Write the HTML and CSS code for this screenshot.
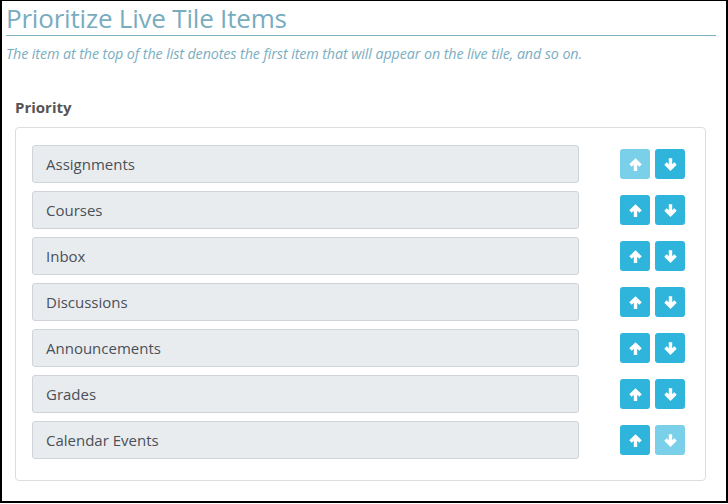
FILE: index.html
```html
<!DOCTYPE html>
<html lang="en">
<head>
  <meta charset="UTF-8">
  <title>Prioritize Live Tile Items</title>
  <meta name="viewport" content="width=device-width, initial-scale=1.0">
  <link rel="stylesheet" href="styles.css">
</head>
<body>
  <div class="frame">
    <h1 class="title">Prioritize Live Tile Items</h1>
    <p class="hint">The item at the top of the list denotes the first item that will appear on the live tile, and so on.</p>

    <div class="section">
      <h2 class="label">Priority</h2>
      <div class="panel">
        <div class="row">
          <div class="item">Assignments</div>
          <div class="btns">
            <button class="btn off"><svg viewBox="0 0 12 12"><path d="M6 1.5 L1.6 5.9 L3.3 7.6 L4.8 6.1 V10.5 H7.2 V6.1 L8.7 7.6 L10.4 5.9 Z"/></svg></button>
            <button class="btn"><svg viewBox="0 0 12 12"><path d="M6 10.5 L1.6 6.1 L3.3 4.4 L4.8 5.9 V1.5 H7.2 V5.9 L8.7 4.4 L10.4 6.1 Z"/></svg></button>
          </div>
        </div>
        <div class="row">
          <div class="item">Courses</div>
          <div class="btns">
            <button class="btn"><svg viewBox="0 0 12 12"><path d="M6 1.5 L1.6 5.9 L3.3 7.6 L4.8 6.1 V10.5 H7.2 V6.1 L8.7 7.6 L10.4 5.9 Z"/></svg></button>
            <button class="btn"><svg viewBox="0 0 12 12"><path d="M6 10.5 L1.6 6.1 L3.3 4.4 L4.8 5.9 V1.5 H7.2 V5.9 L8.7 4.4 L10.4 6.1 Z"/></svg></button>
          </div>
        </div>
        <div class="row">
          <div class="item">Inbox</div>
          <div class="btns">
            <button class="btn"><svg viewBox="0 0 12 12"><path d="M6 1.5 L1.6 5.9 L3.3 7.6 L4.8 6.1 V10.5 H7.2 V6.1 L8.7 7.6 L10.4 5.9 Z"/></svg></button>
            <button class="btn"><svg viewBox="0 0 12 12"><path d="M6 10.5 L1.6 6.1 L3.3 4.4 L4.8 5.9 V1.5 H7.2 V5.9 L8.7 4.4 L10.4 6.1 Z"/></svg></button>
          </div>
        </div>
        <div class="row">
          <div class="item">Discussions</div>
          <div class="btns">
            <button class="btn"><svg viewBox="0 0 12 12"><path d="M6 1.5 L1.6 5.9 L3.3 7.6 L4.8 6.1 V10.5 H7.2 V6.1 L8.7 7.6 L10.4 5.9 Z"/></svg></button>
            <button class="btn"><svg viewBox="0 0 12 12"><path d="M6 10.5 L1.6 6.1 L3.3 4.4 L4.8 5.9 V1.5 H7.2 V5.9 L8.7 4.4 L10.4 6.1 Z"/></svg></button>
          </div>
        </div>
        <div class="row">
          <div class="item">Announcements</div>
          <div class="btns">
            <button class="btn"><svg viewBox="0 0 12 12"><path d="M6 1.5 L1.6 5.9 L3.3 7.6 L4.8 6.1 V10.5 H7.2 V6.1 L8.7 7.6 L10.4 5.9 Z"/></svg></button>
            <button class="btn"><svg viewBox="0 0 12 12"><path d="M6 10.5 L1.6 6.1 L3.3 4.4 L4.8 5.9 V1.5 H7.2 V5.9 L8.7 4.4 L10.4 6.1 Z"/></svg></button>
          </div>
        </div>
        <div class="row">
          <div class="item">Grades</div>
          <div class="btns">
            <button class="btn"><svg viewBox="0 0 12 12"><path d="M6 1.5 L1.6 5.9 L3.3 7.6 L4.8 6.1 V10.5 H7.2 V6.1 L8.7 7.6 L10.4 5.9 Z"/></svg></button>
            <button class="btn"><svg viewBox="0 0 12 12"><path d="M6 10.5 L1.6 6.1 L3.3 4.4 L4.8 5.9 V1.5 H7.2 V5.9 L8.7 4.4 L10.4 6.1 Z"/></svg></button>
          </div>
        </div>
        <div class="row">
          <div class="item">Calendar Events</div>
          <div class="btns">
            <button class="btn"><svg viewBox="0 0 12 12"><path d="M6 1.5 L1.6 5.9 L3.3 7.6 L4.8 6.1 V10.5 H7.2 V6.1 L8.7 7.6 L10.4 5.9 Z"/></svg></button>
            <button class="btn off"><svg viewBox="0 0 12 12"><path d="M6 10.5 L1.6 6.1 L3.3 4.4 L4.8 5.9 V1.5 H7.2 V5.9 L8.7 4.4 L10.4 6.1 Z"/></svg></button>
          </div>
        </div>
      </div>
    </div>
  </div>
</body>
</html>
```

FILE: styles.css
```css
body { margin: 0; font-family: "Open Sans", "Noto Sans", sans-serif; background: #fff; }
.frame { width: 720px; height: 500px; border: 2px solid #000; border-top-width: 1px; padding: 0 0 0 4px; overflow: hidden; }
.title { margin: 0 10px 0 0; font-size: 26px; font-weight: 400; line-height: 34px; color: #78acbf; border-bottom: 1px solid #7eafc1; letter-spacing: -0.2px; }
.hint { margin: 8px 0 0; font-size: 14.3px; font-style: italic; color: #7aaec1; line-height: 20px; letter-spacing: -0.1px; }
.section { padding: 0 20px 0 9px; }
.label { margin: 33px 0 0; font-size: 15px; font-weight: 700; color: #555; line-height: 20px; }
.panel { margin-top: 10px; border: 1px solid #ddd; border-radius: 4px; padding: 17px 20px 21px 16px; display: flex; flex-direction: column; gap: 8px; }
.row { display: flex; align-items: center; gap: 41px; }
.item { flex: 1; height: 36px; line-height: 36px; padding: 0 13px; background: #e9ecef; border: 1px solid #ced4da; border-radius: 3px; color: #495057; font-size: 15px; }
.btns { display: flex; gap: 5px; }
.btn { width: 30px; height: 30px; padding: 0; border: 0; border-radius: 3px; background: #2fb5dc; display: flex; align-items: center; justify-content: center; cursor: pointer; }
.btn.off { background: #7bd0e9; cursor: default; }
.btn svg { width: 17px; height: 17px; fill: #fff; }
```
